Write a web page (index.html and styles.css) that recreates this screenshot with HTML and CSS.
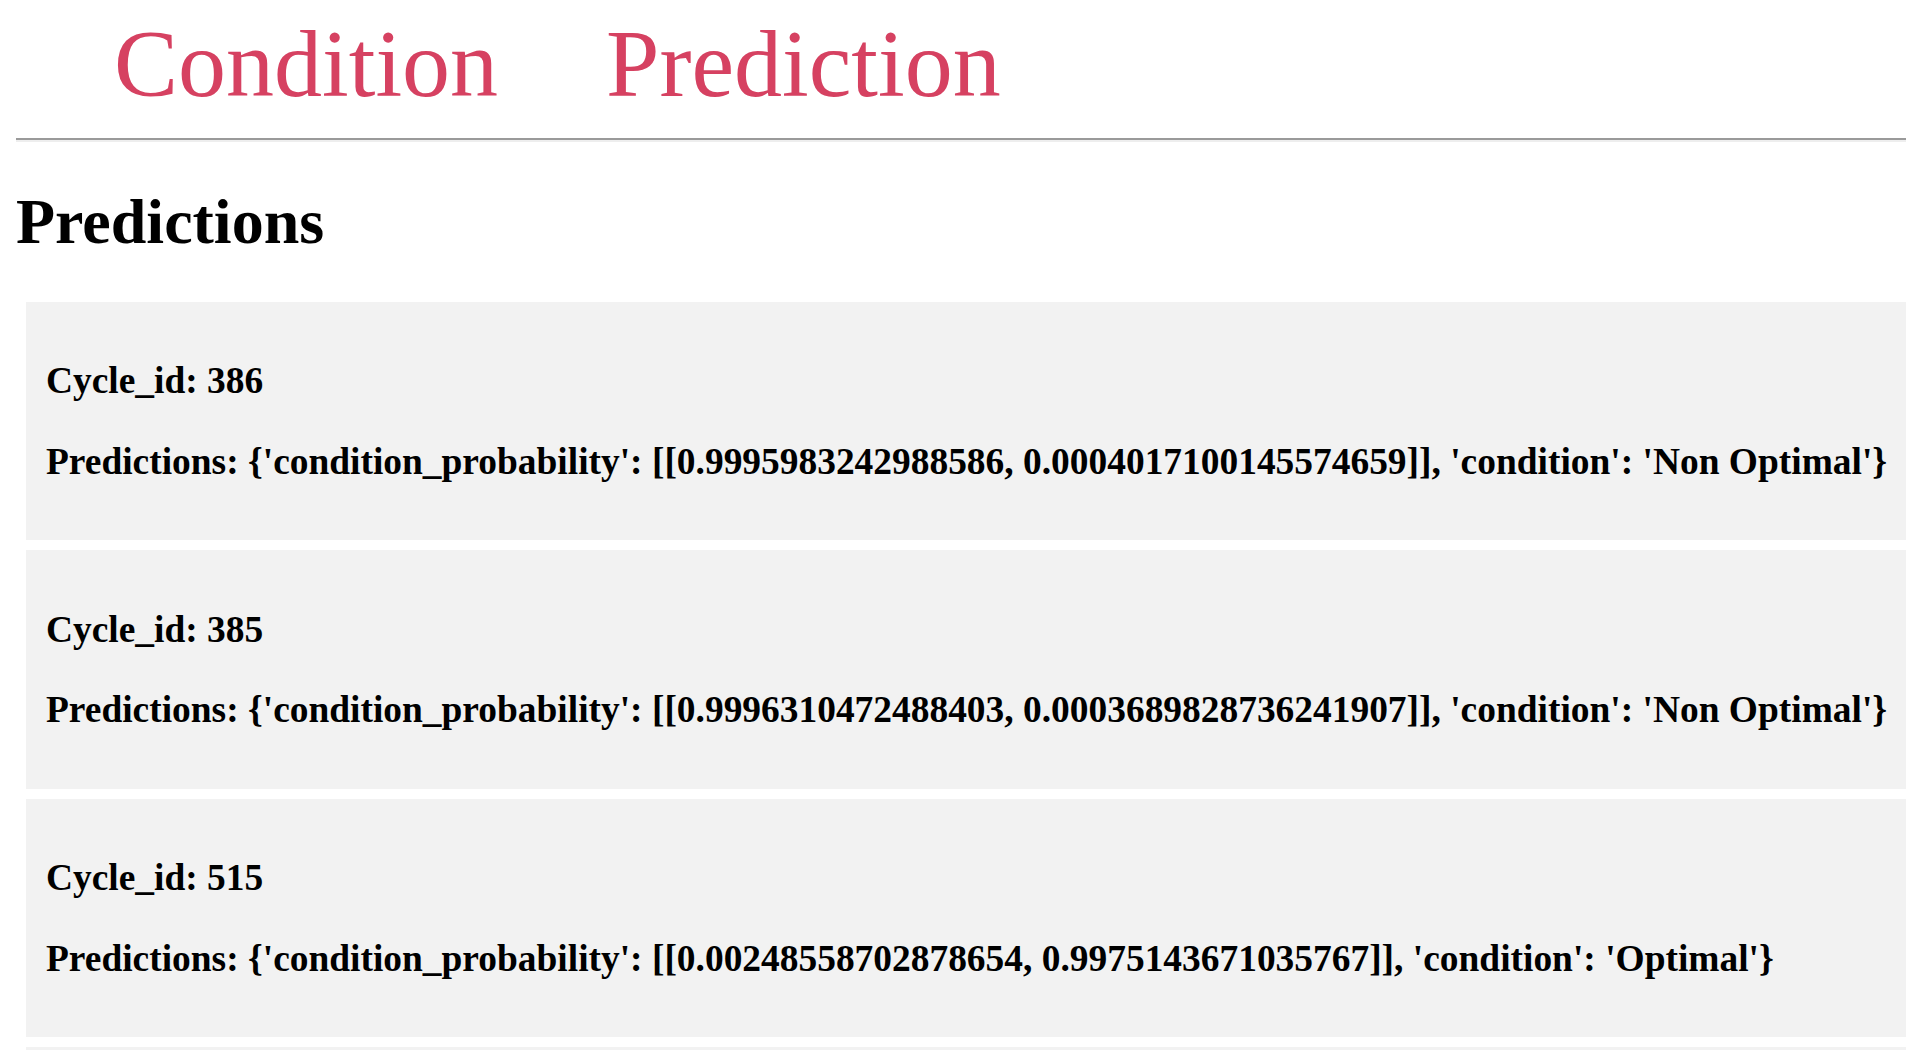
FILE: index.html
```html
<!DOCTYPE html>
<html lang="en">
<head>
<meta charset="utf-8">
<title>Predictions</title>
<link rel="stylesheet" href="styles.css">
</head>
<body>
<nav class="nav">
  <a class="nav-link" href="#">Condition</a>
  <a class="nav-link" href="#">Prediction</a>
</nav>
<hr class="rule">
<h1 class="title">Predictions</h1>
<div class="card">
  <h3 class="line">Cycle_id: 386</h3>
  <h3 class="line">Predictions: {'condition_probability': [[0.9995983242988586, 0.0004017100145574659]], 'condition': 'Non Optimal'}</h3>
</div>
<div class="card">
  <h3 class="line">Cycle_id: 385</h3>
  <h3 class="line">Predictions: {'condition_probability': [[0.9996310472488403, 0.0003689828736241907]], 'condition': 'Non Optimal'}</h3>
</div>
<div class="card">
  <h3 class="line">Cycle_id: 515</h3>
  <h3 class="line">Predictions: {'condition_probability': [[0.00248558702878654, 0.9975143671035767]], 'condition': 'Optimal'}</h3>
</div>
<div class="card card-more"></div>
</body>
</html>
```

FILE: styles.css
```css
html {
  overflow: hidden;
}

body {
  margin: 16px 0 0 16px;
  font-family: "Liberation Serif", "Times New Roman", serif;
  color: #000;
  background: #fff;
}

.nav {
  display: flex;
  gap: 108px;
  padding-left: 98px;
  margin: 0;
}

.nav-link {
  font-size: 96px;
  line-height: 96px;
  color: #d64161;
  text-decoration: none;
}

.rule {
  margin: 26px 0 0 0;
  border: none;
  border-top: 2px solid #9a9a9a;
  border-bottom: 2px solid #eeeeee;
  height: 0;
}

.title {
  font-size: 64px;
  line-height: 74px;
  font-weight: bold;
  margin: 43px 0;
}

.card {
  background: #f2f2f2;
  margin: 10px 0 10px 10px;
  padding: 20px;
  white-space: nowrap;
  overflow: hidden;
}

.card-more {
  min-height: 198px;
}

.line {
  font-size: 37.44px;
  line-height: 43px;
  font-weight: bold;
  margin: 37.44px 0;
}
```
